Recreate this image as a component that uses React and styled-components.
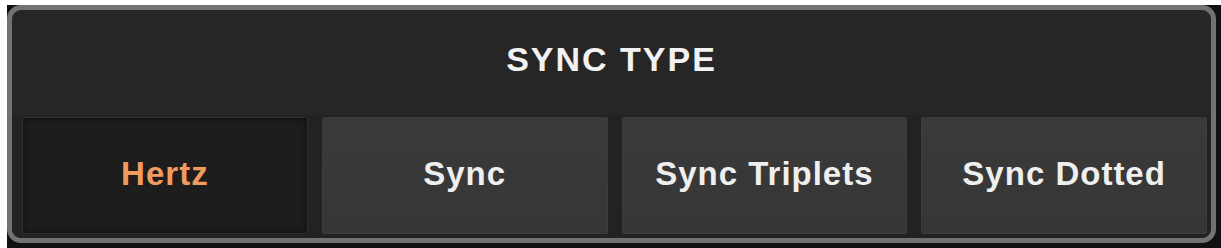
import React from "react";
import styled, { createGlobalStyle } from "styled-components";

const GlobalStyle = createGlobalStyle`
    html, body {
        margin: 0;
        padding: 0;
        background: #ffffff;
    }
    body {
        font-family: "Liberation Sans", Arial, sans-serif;
    }
`

const Backdrop = styled.div`
    margin: 5px 0 0 7px;
    height: 243px;
    background: #111111;
    display: flex;
`

const Frame = styled.div`
    flex: 1;
    margin-right: 5px;
    height: 238px;
    box-sizing: border-box;
    border: 5px solid #727272;
    border-radius: 14px;
    background: #262626;
    display: flex;
    flex-direction: column;
    overflow: hidden;
`

const Header = styled.div`
    height: 105px;
    display: flex;
    align-items: center;
    justify-content: center;
    padding-bottom: 6px;
    box-sizing: border-box;
`

const Title = styled.h2`
    margin: 0;
    font-size: 34px;
    font-weight: 700;
    letter-spacing: 2px;
    color: #f2f2f2;
`

const Row = styled.div`
    flex: 1;
    display: flex;
    gap: 14px;
    padding: 2px 4px 4px 10px;
    background: #222222;
`

const Option = styled.button`
    flex: 1;
    display: flex;
    align-items: center;
    justify-content: center;
    padding: 0 0 4px 0;
    box-sizing: border-box;
    font-family: "Liberation Sans", Arial, sans-serif;
    font-size: 33px;
    font-weight: 700;
    letter-spacing: 1px;
    cursor: pointer;
    border-radius: 2px;
    color: ${p => (p.$active ? "#f29b5e" : "#efefef")};
    background: ${p => (p.$active ? "#1d1d1d" : "linear-gradient(#3a3a3a, #363636)")};
    border: 1px solid ${p => (p.$active ? "#2e2e2e" : "#3c3c3c")};
    box-shadow: ${p => (p.$active ? "inset 0 0 6px rgba(0,0,0,0.6)" : "none")};
`

const options = ["Hertz", "Sync", "Sync Triplets", "Sync Dotted"];

const App = () => (
    <>
        <GlobalStyle />
        <Backdrop>
            <Frame>
                <Header>
                    <Title>SYNC TYPE</Title>
                </Header>
                <Row>
                    {options.map((o, i) => (
                        <Option key={o} $active={i === 0}>{o}</Option>
                    ))}
                </Row>
            </Frame>
        </Backdrop>
    </>
)

export default App;
